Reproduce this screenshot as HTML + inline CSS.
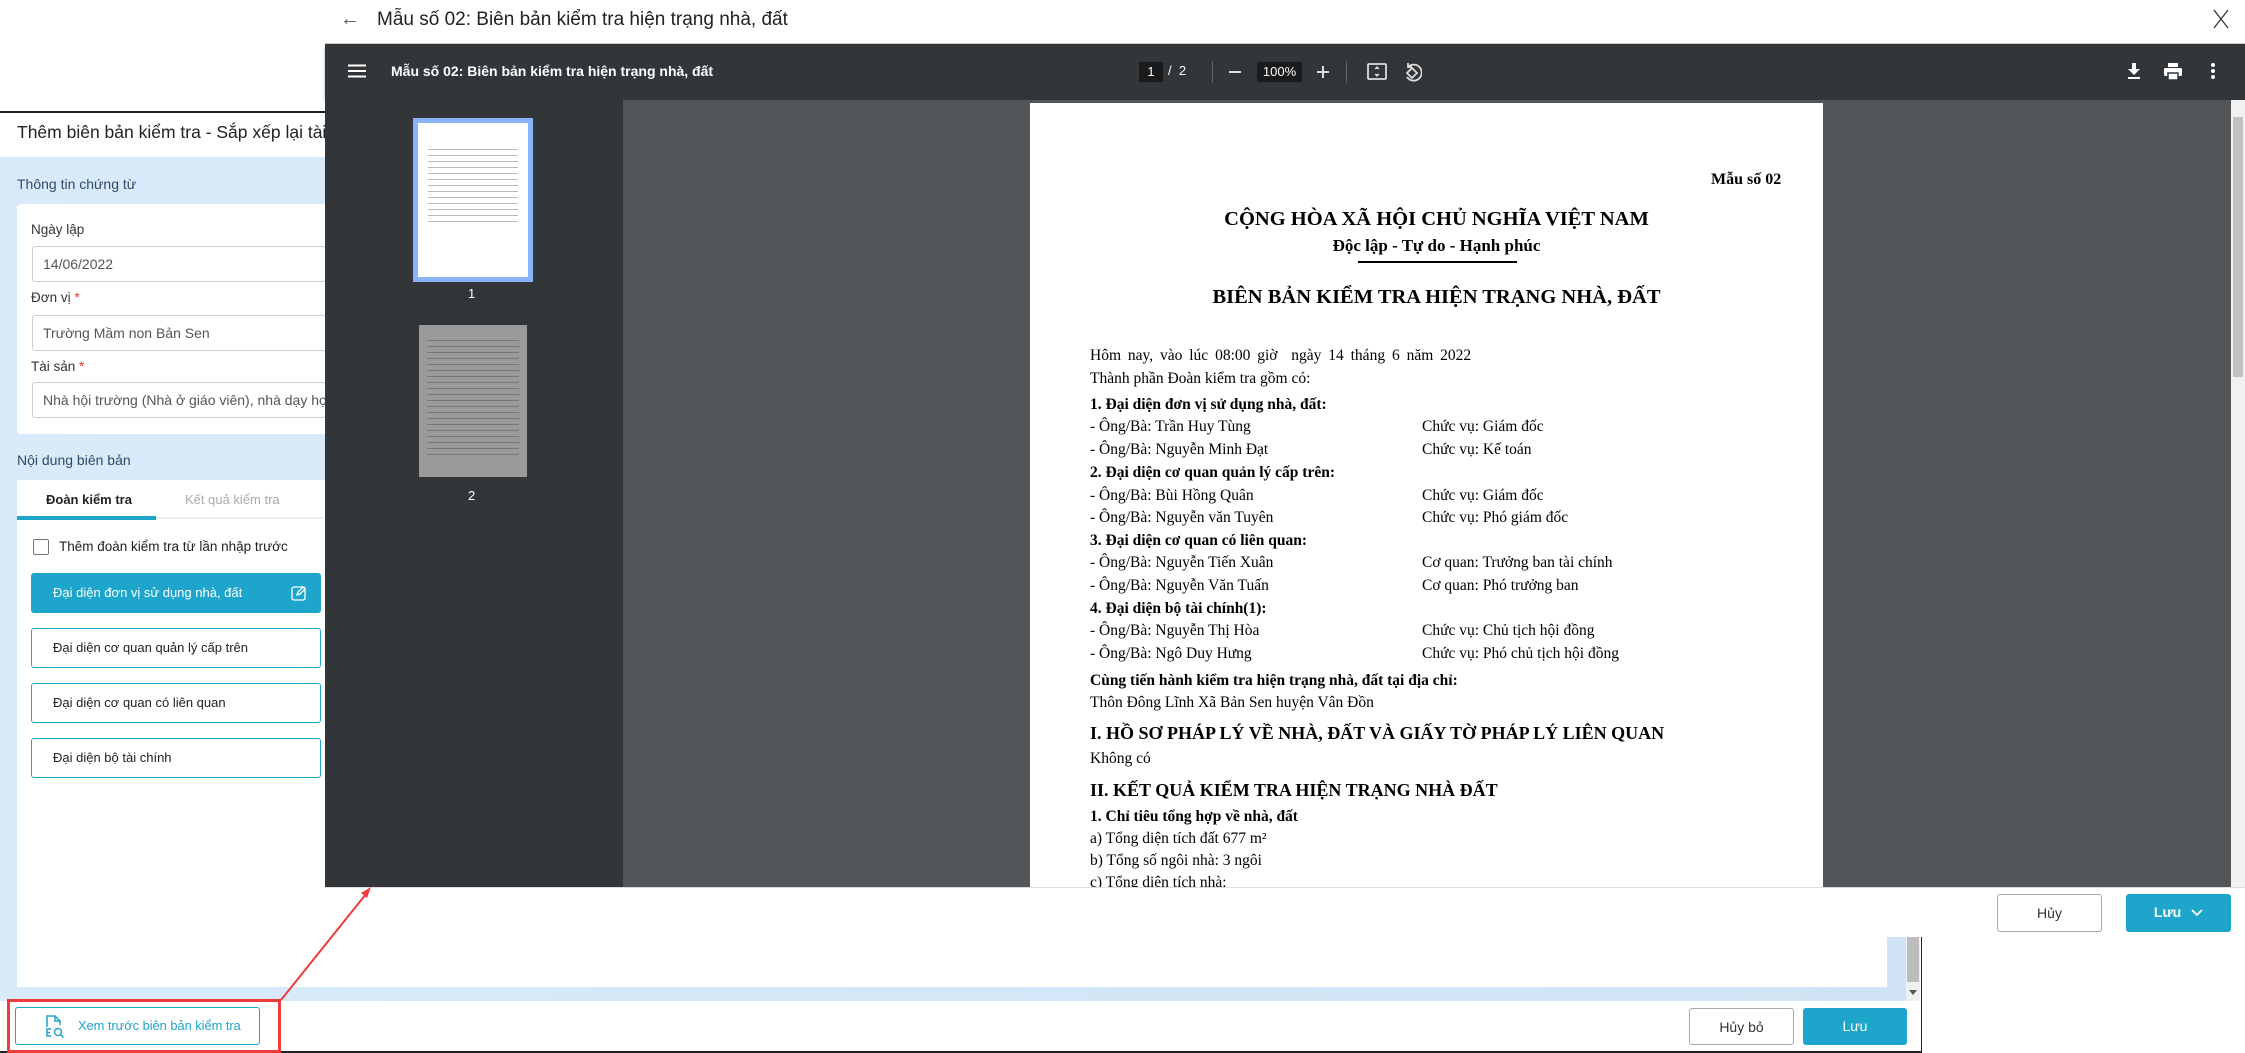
<!DOCTYPE html>
<html><head><meta charset="utf-8"><style>
*{margin:0;padding:0;box-sizing:border-box}
body{width:2245px;height:1053px;position:relative;overflow:hidden;background:#fff;font-family:"Liberation Sans",sans-serif}
.a{position:absolute;white-space:nowrap}
.s{font-family:"Liberation Serif",serif;color:#000}
.lbl{font-size:14px;color:#333}
.inp{position:absolute;left:32px;width:320px;height:36px;border:1px solid #cfcfcf;border-radius:3px;background:#fff;font-size:14px;color:#555;padding:9px 0 0 10px;white-space:nowrap;overflow:hidden}
.btn{position:absolute;left:31px;width:290px;height:40px;border:1px solid #1da5cc;border-radius:3px;background:#fff;font-size:13px;color:#222;padding:11px 0 0 21px;white-space:nowrap}
.b{font-weight:bold}
.p{font-size:15.5px;line-height:18px}
</style></head><body>

<!-- underlying dialog -->
<div class="a" style="left:0;top:111px;width:1922px;height:942px;border-top:2px solid #222;border-right:1px solid #222;border-bottom:2px solid #222;background:#fff"></div>
<div class="a" style="left:17px;top:122px;font-size:17.5px;color:#222">Thêm biên bản kiểm tra - Sắp xếp lại tài sản</div>
<div class="a" style="left:0;top:157px;width:1920px;height:844px;background:linear-gradient(90deg,#d9ebfa,#cfe3f4)"></div>
<div class="a" style="left:17px;top:176px;font-size:14px;color:#2f4a66">Thông tin chứng từ</div>
<div class="a" style="left:17px;top:204px;width:1870px;height:230px;background:#fff;border-radius:4px"></div>
<div class="a lbl" style="left:31px;top:222px;font-size:13.5px">Ngày lập</div>
<div class="inp" style="top:246px">14/06/2022</div>
<div class="a lbl" style="left:31px;top:290px;font-size:13.5px">Đơn vị <span style="color:#e33">*</span></div>
<div class="inp" style="top:315px">Trường Mầm non Bản Sen</div>
<div class="a lbl" style="left:31px;top:359px;font-size:13.5px">Tài sản <span style="color:#e33">*</span></div>
<div class="inp" style="top:382px">Nhà hội trường (Nhà ở giáo viên), nhà dạy học và ...</div>
<div class="a" style="left:17px;top:452px;font-size:14px;color:#2f4a66">Nội dung biên bản</div>
<div class="a" style="left:17px;top:480px;width:1870px;height:507px;background:#fff"></div>
<div class="a" style="left:17px;top:517px;width:1870px;height:2px;background:#eee"></div>
<div class="a" style="left:17px;top:516px;width:139px;height:4px;background:#1da5cc"></div>
<div class="a b" style="left:46px;top:492px;font-size:13px;color:#222">Đoàn kiểm tra</div>
<div class="a" style="left:185px;top:492px;font-size:13px;color:#aaa">Kết quả kiểm tra</div>
<div class="a" style="left:33px;top:539px;width:16px;height:16px;border:1.5px solid #777;border-radius:2px"></div>
<div class="a" style="left:59px;top:539px;font-size:13.5px;color:#222">Thêm đoàn kiểm tra từ lần nhập trước</div>
<div class="btn" style="top:573px;background:#1da5cc;color:#fff">Đại diện đơn vị sử dụng nhà, đất
<svg style="position:absolute;left:259px;top:11px" width="16" height="16" viewBox="0 0 16 16" fill="none" stroke="#fff" stroke-width="1.3"><rect x="1" y="2" width="13" height="13" rx="2"/><path d="M6 10l1-3 5-5 2 2-5 5z"/></svg></div>
<div class="btn" style="top:628px">Đại diện cơ quan quản lý cấp trên</div>
<div class="btn" style="top:683px">Đại diện cơ quan có liên quan</div>
<div class="btn" style="top:738px">Đại diện bộ tài chính</div>
<div class="a" style="left:1906px;top:937px;width:14px;height:64px;background:#f0f0f0"></div>
<div class="a" style="left:1907px;top:937px;width:12px;height:45px;background:#bdbdbd"></div>
<div class="a" style="left:1909px;top:990px;border-left:4px solid transparent;border-right:4px solid transparent;border-top:5px solid #555"></div>
<!-- footer buttons -->
<div class="a" style="left:15px;top:1007px;width:245px;height:38px;border:1px solid #1da5cc;border-radius:3px"></div>
<svg class="a" style="left:44px;top:1014px" width="22" height="24" viewBox="0 0 22 24" fill="none" stroke="#1da5cc" stroke-width="1.5"><path d="M3 13V2h8l5 5v4"/><path d="M11 2v5h5"/><path d="M7 15H3v7h4M3 18.5h3"/><circle cx="14" cy="18" r="3.5"/><path d="M16.5 20.5l3 3"/></svg>
<div class="a" style="left:78px;top:1018px;font-size:12.8px;color:#1da5cc">Xem trước biên bản kiểm tra</div>
<div class="a" style="left:7px;top:999px;width:274px;height:54px;border:3px solid #ee3b3b"></div>
<div class="a" style="left:1689px;top:1008px;width:105px;height:37px;border:1px solid #aaa;border-radius:3px;font-size:14px;color:#333;text-align:center;padding-top:10px">Hủy bỏ</div>
<div class="a" style="left:1803px;top:1008px;width:104px;height:37px;background:#1da5cc;border-radius:3px;font-size:14px;color:#fff;text-align:center;padding-top:10px">Lưu</div>

<!-- overlay -->
<div class="a" style="left:325px;top:0;width:1920px;height:937px;background:#fff"></div>
<div class="a" style="left:340px;top:8px;font-size:20px;color:#555">←</div>
<div class="a" style="left:377px;top:9px;font-size:19px;color:#222">Mẫu số 02: Biên bản kiểm tra hiện trạng nhà, đất</div>
<svg class="a" style="left:2212px;top:8px" width="18" height="22" viewBox="0 0 18 22" stroke="#333" stroke-width="1.3"><path d="M2 2l14 18M16 2L2 20"/></svg>
<div class="a" style="left:325px;top:43px;width:1920px;height:1px;background:#ccc"></div>
<div class="a" style="left:325px;top:44px;width:1920px;height:56px;background:#323639;box-shadow:0 2px 3px rgba(0,0,0,.3)"></div>
<svg class="a" style="left:348px;top:64px" width="18" height="14"><path d="M0 1.5h18M0 7h18M0 12.5h18" stroke="#fff" stroke-width="2"/></svg>
<div class="a b" style="left:391px;top:63px;font-size:14px;color:#fff">Mẫu số 02: Biên bản kiểm tra hiện trạng nhà, đất</div>
<div class="a" style="left:1139px;top:62px;width:24px;height:20px;background:#191b1c;color:#fff;font-size:13px;text-align:center;padding-top:2px">1</div>
<div class="a" style="left:1168px;top:63px;color:#fff;font-size:13px">/ &nbsp;2</div>
<div class="a" style="left:1212px;top:61px;width:1px;height:22px;background:#666"></div>
<div class="a" style="left:1229px;top:71px;width:12px;height:2px;background:#ddd"></div>
<div class="a" style="left:1257px;top:62px;width:45px;height:20px;background:#191b1c;color:#fff;font-size:13px;text-align:center;padding-top:2px">100%</div>
<svg class="a" style="left:1317px;top:66px" width="12" height="12"><path d="M6 0v12M0 6h12" stroke="#ddd" stroke-width="2"/></svg>
<div class="a" style="left:1346px;top:61px;width:1px;height:22px;background:#666"></div>
<svg class="a" style="left:1367px;top:63px" width="20" height="18" fill="none" stroke="#ddd" stroke-width="1.8"><rect x="1" y="1" width="18" height="15" rx="1"/><path d="M10 4v2M10 11v2" /><path d="M8 6l2-2 2 2M8 11l2 2 2-2" stroke-width="1.2"/></svg>
<svg class="a" style="left:1402px;top:61px" width="20" height="22" fill="none" stroke="#ddd" stroke-width="1.8"><path d="M10 7l5 5-5 5-5-5z"/><path d="M6 6a8 8 0 1 1 -1 10"/><path d="M6 2v4h4"/></svg>
<svg class="a" style="left:2127px;top:63px" width="14" height="17" fill="#fff"><path d="M5 0h4v6h4l-6 6-6-6h4z"/><rect x="1" y="14" width="12" height="2"/></svg>
<svg class="a" style="left:2164px;top:63px" width="18" height="17" fill="#fff"><rect x="4" y="0" width="10" height="4"/><rect x="0" y="5" width="18" height="8" rx="1.5"/><rect x="4" y="10" width="10" height="7" fill="#fff" stroke="#323639" stroke-width="1.5"/></svg>
<svg class="a" style="left:2211px;top:63px" width="4" height="16" fill="#fff"><circle cx="2" cy="2" r="2"/><circle cx="2" cy="8" r="2"/><circle cx="2" cy="14" r="2"/></svg>

<div class="a" style="left:325px;top:100px;width:298px;height:787px;background:#323639"></div>
<div class="a" style="left:623px;top:100px;width:1622px;height:787px;background:#525659"></div>
<div class="a" style="left:413px;top:118px;width:120px;height:164px;background:#8ab4f8;padding:5px"><div style="background:#fff;width:100%;height:100%;position:relative">
<div style="position:absolute;left:10px;top:22px;width:90px;height:80px;background:repeating-linear-gradient(#fff 0 4px,#bbb 4px 5px,#fff 5px 6px)"></div></div></div>
<div class="a" style="left:468px;top:286px;color:#fff;font-size:13px">1</div>
<div class="a" style="left:419px;top:325px;width:108px;height:152px;background:#9a9a9a"><div style="position:absolute;left:8px;top:10px;width:92px;height:120px;background:repeating-linear-gradient(#9a9a9a 0 5px,#777 5px 6px)"></div></div>
<div class="a" style="left:468px;top:488px;color:#fff;font-size:13px">2</div>
<div class="a" style="left:2231px;top:100px;width:14px;height:787px;background:#f1f1f1"></div>
<div class="a" style="left:2233px;top:117px;width:10px;height:260px;background:#c1c1c1"></div>

<!-- page -->
<div class="a" style="left:1030px;top:103px;width:793px;height:784px;background:#fff"></div>
<div class="a s b" style="left:1711px;top:171px;font-size:16px">Mẫu số 02</div>
<div class="a s b" style="left:1030px;width:813px;text-align:center;top:208px;font-size:20.5px">CỘNG HÒA XÃ HỘI CHỦ NGHĨA VIỆT NAM</div>
<div class="a s b" style="left:1030px;width:813px;text-align:center;top:236px;font-size:17px">Độc lập - Tự do - Hạnh phúc</div>
<div class="a" style="left:1358px;top:261px;width:159px;height:1.5px;background:#000"></div>
<div class="a s b" style="left:1030px;width:813px;text-align:center;top:286px;font-size:20.5px">BIÊN BẢN KIỂM TRA HIỆN TRẠNG NHÀ, ĐẤT</div>
<div class="s p">
<div class="a" style="left:1090px;top:347px;word-spacing:3px">Hôm nay, vào lúc 08:00 giờ&nbsp; ngày 14 tháng 6 năm 2022</div>
<div class="a" style="left:1090px;top:370px">Thành phần Đoàn kiểm tra gồm có:</div>
<div class="a b" style="left:1090px;top:396px">1. Đại diện đơn vị sử dụng nhà, đất:</div>
<div class="a" style="left:1090px;top:418px">- Ông/Bà: Trần Huy Tùng</div><div class="a" style="left:1422px;top:418px">Chức vụ: Giám đốc</div>
<div class="a" style="left:1090px;top:441px">- Ông/Bà: Nguyễn Minh Đạt</div><div class="a" style="left:1422px;top:441px">Chức vụ: Kế toán</div>
<div class="a b" style="left:1090px;top:464px">2. Đại diện cơ quan quản lý cấp trên:</div>
<div class="a" style="left:1090px;top:487px">- Ông/Bà: Bùi Hồng Quân</div><div class="a" style="left:1422px;top:487px">Chức vụ: Giám đốc</div>
<div class="a" style="left:1090px;top:509px">- Ông/Bà: Nguyễn văn Tuyên</div><div class="a" style="left:1422px;top:509px">Chức vụ: Phó giám đốc</div>
<div class="a b" style="left:1090px;top:532px">3. Đại diện cơ quan có liên quan:</div>
<div class="a" style="left:1090px;top:554px">- Ông/Bà: Nguyễn Tiến Xuân</div><div class="a" style="left:1422px;top:554px">Cơ quan: Trưởng ban tài chính</div>
<div class="a" style="left:1090px;top:577px">- Ông/Bà: Nguyễn Văn Tuấn</div><div class="a" style="left:1422px;top:577px">Cơ quan: Phó trưởng ban</div>
<div class="a b" style="left:1090px;top:600px">4. Đại diện bộ tài chính(1):</div>
<div class="a" style="left:1090px;top:622px">- Ông/Bà: Nguyễn Thị Hòa</div><div class="a" style="left:1422px;top:622px">Chức vụ: Chủ tịch hội đồng</div>
<div class="a" style="left:1090px;top:645px">- Ông/Bà: Ngô Duy Hưng</div><div class="a" style="left:1422px;top:645px">Chức vụ: Phó chủ tịch hội đồng</div>
<div class="a b" style="left:1090px;top:672px">Cùng tiến hành kiểm tra hiện trạng nhà, đất tại địa chỉ:</div>
<div class="a" style="left:1090px;top:694px">Thôn Đông Lĩnh Xã Bản Sen huyện Vân Đồn</div>
<div class="a b" style="left:1090px;top:722px;font-size:18px;line-height:22px">I. HỒ SƠ PHÁP LÝ VỀ NHÀ, ĐẤT VÀ GIẤY TỜ PHÁP LÝ LIÊN QUAN</div>
<div class="a" style="left:1090px;top:750px">Không có</div>
<div class="a b" style="left:1090px;top:779px;font-size:18px;line-height:22px">II. KẾT QUẢ KIỂM TRA HIỆN TRẠNG NHÀ ĐẤT</div>
<div class="a b" style="left:1090px;top:808px">1. Chỉ tiêu tổng hợp về nhà, đất</div>
<div class="a" style="left:1090px;top:830px">a) Tổng diện tích đất 677 m²</div>
<div class="a" style="left:1090px;top:852px">b) Tổng số ngôi nhà: 3 ngôi</div>
<div class="a" style="left:1090px;top:874px;height:13px;overflow:hidden;line-height:18px">c) Tổng diện tích nhà:</div>
</div>
<div class="a" style="left:325px;top:887px;width:1920px;height:1px;background:#ddd"></div>
<div class="a" style="left:1997px;top:894px;width:105px;height:38px;border:1px solid #aaa;border-radius:3px;font-size:14px;color:#333;text-align:center;padding-top:10px">Hủy</div>
<div class="a b" style="left:2126px;top:894px;width:105px;height:38px;background:#1da5cc;border-radius:3px;font-size:14px;color:#fff;text-align:center;padding-top:10px">Lưu <svg width="12" height="8" style="margin-left:6px"><path d="M1 1l5 5 5-5" stroke="#fff" stroke-width="1.8" fill="none"/></svg></div>
<svg class="a" style="left:0;top:0" width="2245" height="1053"><line x1="281" y1="1000" x2="366" y2="894" stroke="#ee3b3b" stroke-width="2"/><path d="M371 887l-10 6 6 5z" fill="#ee3b3b"/></svg>
</body></html>
